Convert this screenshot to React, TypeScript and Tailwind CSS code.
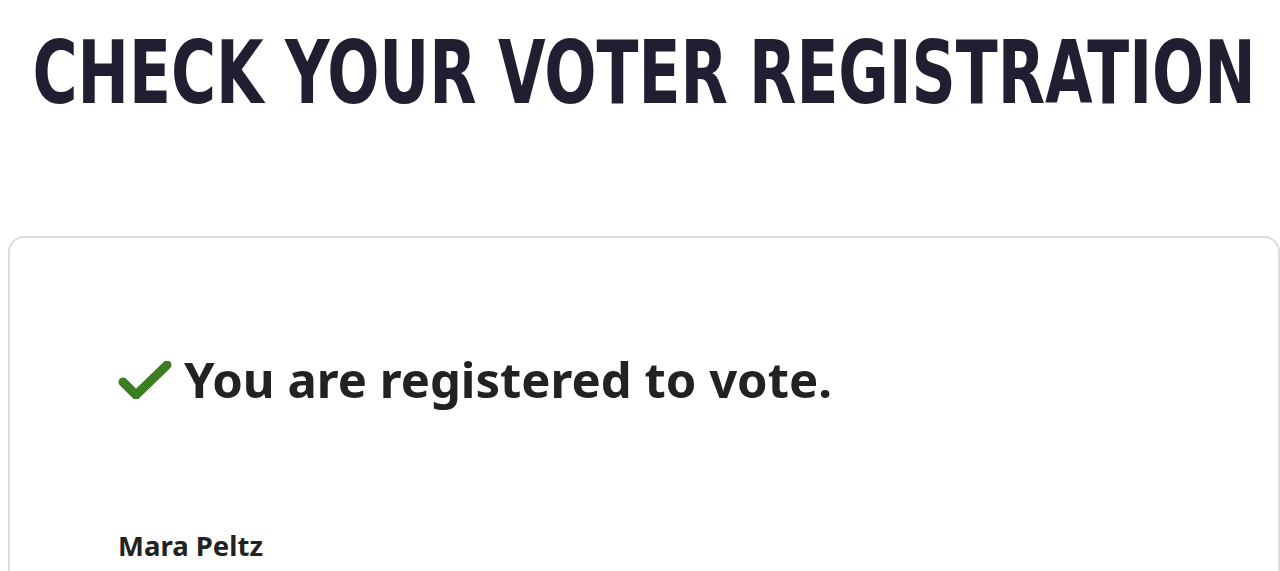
export default function App() {
  return (
    <div className="min-h-screen bg-white pl-2 overflow-hidden">
      <header className="flex justify-center pt-[23px] h-[236px]">
        <h1
          className="text-[88px] leading-[100px] font-bold text-[#201e30] whitespace-nowrap origin-center scale-x-[0.776]"
          style={{ fontFamily: '"DejaVu Sans Condensed", "DejaVu Sans", sans-serif', fontStretch: 'condensed' }}
        >
          CHECK YOUR VOTER REGISTRATION
        </h1>
      </header>
      <section className="w-[1272px] rounded-2xl border-2 border-[#dcdcdc] border-b-0 pl-[108px] pt-[117px] h-[400px]">
        <div className="flex items-center gap-3">
          <svg width="54" height="38" viewBox="0 0 54 38" className="shrink-0">
            <path d="M5 21 L18 34 L49 4" fill="none" stroke="#3a7d23" strokeWidth="9" strokeLinecap="round" strokeLinejoin="round" />
          </svg>
          <h2
            className="text-[49px] font-bold text-[#222222] leading-none"
            style={{ fontFamily: '"Noto Sans", sans-serif' }}
          >
            You are registered to vote.
          </h2>
        </div>
        <p
          className="mt-[121px] text-[27.5px] font-bold text-[#222222]"
          style={{ fontFamily: '"Noto Sans", sans-serif' }}
        >
          Mara Peltz
        </p>
      </section>
    </div>
  );
}
